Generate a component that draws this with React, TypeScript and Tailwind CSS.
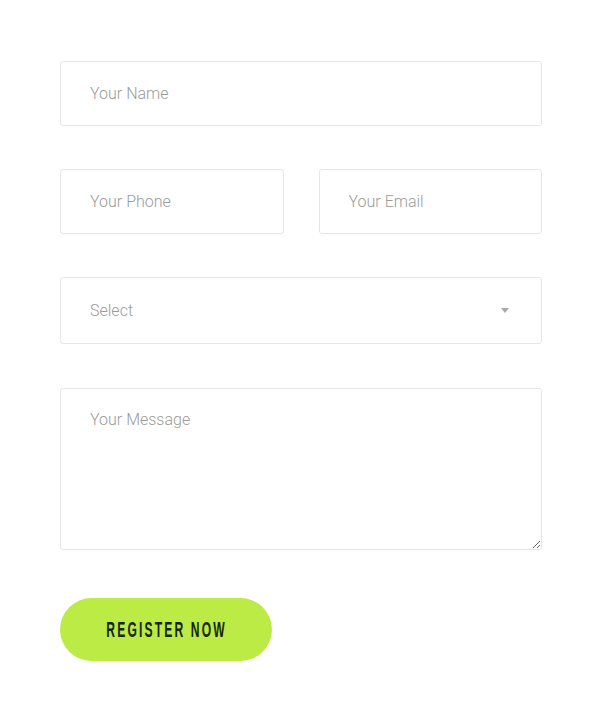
import React, { useState } from 'react';

const fieldBase =
  'w-full border border-[#e6e6e6] rounded-[3px] bg-white px-[29px] text-[16px] font-light placeholder:text-[#9b9b9b] outline-none';

const App: React.FC = () => {
  const [choice, setChoice] = useState('');

  return (
    <div className="min-h-screen bg-white" style={{ fontFamily: 'Roboto, "Noto Sans", sans-serif' }}>
      <form className="w-[482px] ml-[60px] pt-[61px] flex flex-col gap-[43px]" onSubmit={(e) => e.preventDefault()}>
        <input type="text" placeholder="Your Name" className={`${fieldBase} h-[65px] text-[#555]`} />

        <div className="flex gap-[35px]">
          <input type="tel" placeholder="Your Phone" className={`${fieldBase} h-[65px] text-[#555]`} />
          <input type="email" placeholder="Your Email" className={`${fieldBase} h-[65px] text-[#555]`} />
        </div>

        <div className="relative">
          <select
            value={choice}
            onChange={(e) => setChoice(e.target.value)}
            className={`${fieldBase} h-[67px] appearance-none text-[#9b9b9b]`}
          >
            <option value="">Select</option>
            <option value="a">Option A</option>
            <option value="b">Option B</option>
          </select>
          {/* caret */}
          <span className="pointer-events-none absolute right-[33px] top-[31px] w-0 h-0 border-l-[4px] border-r-[4px] border-t-[5px] border-l-transparent border-r-transparent border-t-[#aaa]" />
        </div>

        <textarea placeholder="Your Message" className={`${fieldBase} h-[162px] pt-[19px] mt-[1px] text-[#555]`} />

        <button
          type="submit"
          className="w-[212px] h-[63px] mt-[5px] rounded-full bg-[#bbeb44] text-[#16260f] flex items-center justify-center"
        >
          {/* condensed headline look, no Oswald offline */}
          <span
            className="inline-block whitespace-nowrap text-[22px] font-bold uppercase tracking-[3.9px] scale-x-[0.55] translate-x-[1px]"
            style={{ fontFamily: '"Liberation Sans", Arial, sans-serif' }}
          >
            Register Now
          </span>
        </button>
      </form>
    </div>
  );
};

export default App;
